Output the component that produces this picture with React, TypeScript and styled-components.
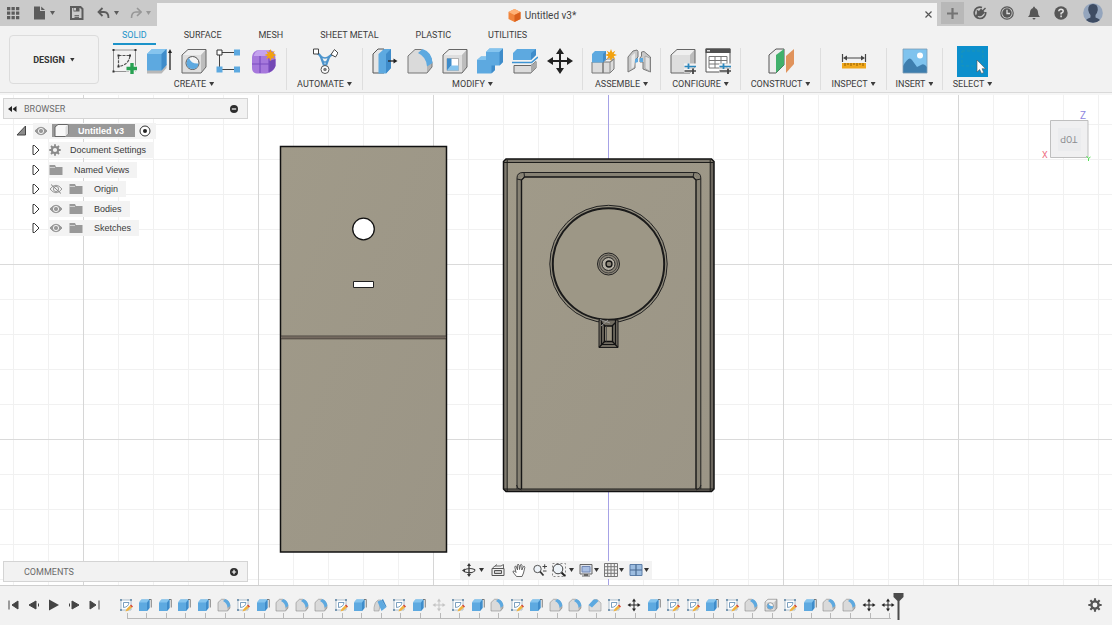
import React from 'react';
import styled, { createGlobalStyle, css } from 'styled-components';

const GlobalStyle = createGlobalStyle`
  * { box-sizing: border-box; }
  body { margin: 0; background: #f2f2f2; color: #3c3c3c; font-family: Roboto, "Liberation Sans", sans-serif; font-size: 9px; line-height: 12px; }
  button { margin: 0; padding: 0; border: 0; background: none; color: inherit; font: inherit; cursor: pointer; }
  ul, ol { margin: 0; padding: 0; list-style: none; }
  svg { display: block; flex: none; }
`;

/* ---------- layout ---------- */

const Page = styled.div`
  display: flex;
  flex-direction: column;
  min-height: 100vh;
`;

const TitleBar = styled.header`
  display: flex;
  height: 26px;
  background: #cacaca;
`;

const QuickTools = styled.div`
  display: flex;
  align-items: center;
  width: 157px;
  padding-left: 6px;
  gap: 11px;
`;

const QuickButton = styled.button<{ $faded?: boolean }>`
  display: flex;
  align-items: center;
  gap: 4px;
  color: ${(p) => (p.$faded ? '#979797' : '#5c5c5c')};
`;

const DocumentTab = styled.div`
  display: flex;
  flex: 1;
  align-items: center;
  margin-top: 3px;
  padding-right: 4px;
  background: #f2f2f2;
`;

const DocumentTitle = styled.h1`
  display: flex;
  flex: 1;
  align-items: center;
  justify-content: center;
  gap: 4px;
  margin: 0;
  padding: 2px 0 0 3px;
  color: #444;
  font-size: 10px;
  font-weight: 400;
`;

const AccountTools = styled.div`
  display: flex;
  align-items: center;
  width: 175px;
  padding: 0 6px 0 4px;
  color: #575757;
`;

const NewTab = styled.button`
  display: grid;
  place-items: center;
  width: 23px;
  height: 22px;
  margin-right: 2px;
  background: #b8b8b8;
`;

const RoundButton = styled.button`
  display: grid;
  place-items: center;
  width: 27px;
  height: 22px;
`;

const Avatar = styled.button`
  display: grid;
  justify-content: end;
  flex: 1;
  padding-right: 3px;
`;

const Ribbon = styled.section`
  display: flex;
  border-bottom: 1px solid #d9d9d9;
  background: #f2f2f2;
`;

const DesignButton = styled.button`
  display: flex;
  align-items: center;
  justify-content: center;
  gap: 5px;
  width: 90px;
  height: 49px;
  margin: 9px 3px 8px 9px;
  border: 1px solid #dcdcdc;
  border-radius: 4px;
  background: #f2f2f2;
  color: #333;
  font-weight: 700;
`;

const RibbonBody = styled.div`
  flex: 1;
`;

const TabRow = styled.nav`
  display: flex;
  gap: 19px;
  padding-left: 11px;
`;

const RibbonTab = styled.button<{ $active?: boolean }>`
  height: 19px;
  padding: 0 9px;
  border-bottom: 2px solid ${(p) => (p.$active ? '#1c93c9' : 'transparent')};
  color: ${(p) => (p.$active ? '#1c93c9' : '#3c3c3c')};
`;

const GroupRow = styled.div`
  display: flex;
  padding-top: 3px;
`;

const Group = styled.div<{ $width: number }>`
  display: flex;
  flex-direction: column;
  align-items: center;
  gap: 4px;
  width: ${(p) => p.$width}px;
  height: 42px;
  & + & { border-left: 1px solid #dedede; }
`;

const GroupIcons = styled.div`
  display: flex;
  gap: 9px;
  height: 26px;
`;

const IconButton = styled.button`
  display: grid;
  place-items: center;
  width: 26px;
  height: 26px;
`;

const SelectTile = styled.button`
  display: grid;
  place-items: center;
  align-self: center;
  width: 31px;
  height: 31px;
  background: #0c8fcc;
`;

const MenuLabel = styled.button`
  display: flex;
  align-items: center;
  gap: 3px;
  color: #3c3c3c;
  white-space: nowrap;
`;

const Caret = styled.span`
  width: 5px;
  height: 4px;
  background: currentColor;
  clip-path: polygon(0 0, 100% 0, 50% 100%);
`;

const Viewport = styled.main`
  position: relative;
  display: flex;
  flex: 1;
  flex-direction: column;
  justify-content: space-between;
  padding: 3px 3px;
  border-top: 2px solid #f6f6f6;
  background: #fff;
`;

const Scene = styled.svg`
  position: absolute;
  inset: 0;
  width: 100%;
  height: 100%;
`;

const Panel = styled.section`
  position: relative;
  width: 245px;
`;

const panelBar = css`
  display: flex;
  align-items: center;
  height: 21px;
  border: 1px solid #d4d4d4;
  background: #f2f2f2;
  color: #6a6a6a;
`;

const PanelHeader = styled.header`
  ${panelBar}
  padding: 0 9px 0 4px;
`;

const PanelTitle = styled.h2`
  flex: 1;
  margin: 0 0 0 7px;
  font-size: 9px;
  font-weight: 400;
`;

const CommentsBar = styled.section`
  ${panelBar}
  width: 245px;
  padding: 0 9px 0 13px;
`;

const Tree = styled.ul`
  display: grid;
  grid-template-rows: repeat(6, 1fr);
  height: 117px;
  margin-top: 2px;
  font-family: "Liberation Sans", sans-serif;
`;

const TreeRow = styled.li<{ $root?: boolean }>`
  display: flex;
  align-items: center;
  gap: ${(p) => (p.$root ? 6 : 8)}px;
  padding-left: ${(p) => (p.$root ? 13 : 29)}px;
`;

const TreeLabel = styled.div<{ $gap: number }>`
  display: flex;
  align-items: center;
  gap: ${(p) => p.$gap}px;
  height: 16px;
  padding: 0 8px 0 1px;
  background: #f3f3f3;
  color: #3a3a3a;
`;

const TreeIcons = styled.span`
  display: flex;
  align-items: center;
  gap: 6px;
`;

const RootLabel = styled.div`
  display: flex;
  align-items: center;
  gap: 4px;
  height: 16px;
  padding: 0 5px 0 1px;
  background: #f3f3f3;
`;

const RootName = styled.span`
  display: flex;
  align-items: center;
  gap: 9px;
  width: 83px;
  height: 13px;
  padding-left: 2px;
  background: #999;
  color: #fff;
  font-weight: 700;
`;

const BottomRow = styled.div`
  position: relative;
  display: grid;
  grid-template-columns: 1fr auto 1fr;
  align-items: center;
`;

const NavBar = styled.nav`
  display: flex;
  align-items: center;
  height: 18px;
  margin-bottom: 3px;
  background: #f3f3f3;
`;

const NavButton = styled.button`
  display: grid;
  place-items: center;
  width: 21px;
  height: 18px;
`;

const NavMenu = styled.button<{ $gap: number }>`
  display: flex;
  align-items: center;
  gap: ${(p) => p.$gap}px;
  height: 18px;
  padding: 0 3px 0 2px;
  color: #333;
`;

const Timeline = styled.footer`
  display: flex;
  align-items: stretch;
  height: 40px;
  padding: 0 10px 0 4px;
  border-top: 1px solid #cfcfcf;
  background: #f2f2f2;
`;

const PlayButton = styled.button`
  display: grid;
  place-items: center;
  width: 20px;
  padding-bottom: 2px;
`;

const Track = styled.ol`
  position: relative;
  display: flex;
  flex: 0 1 782px;
  margin: 0 auto 0 12px;
`;

const Feature = styled.li`
  position: relative;
  display: grid;
  flex: 1;
  place-items: center;
  padding-bottom: 2px;
  &::after {
    content: '';
    position: absolute;
    bottom: 6px;
    left: calc(50% + 1px);
    width: 100%;
    height: 5px;
    border-left: 1px solid #b9b9b9;
    border-bottom: 1px solid #b9b9b9;
  }
  &:nth-last-of-type(1)::after { width: 1px; }
`;

const Marker = styled.svg`
  position: absolute;
  top: 7px;
  right: -6px;
`;

const SettingsButton = styled.button`
  display: grid;
  place-items: center;
  padding-bottom: 2px;
`;

/* ---------- icon helpers ---------- */

type IconProps = { w?: number; h?: number; box?: string; children: React.ReactNode };

const Icon = ({ w = 26, h = w, box = `0 0 ${w} ${h}`, children }: IconProps) => (
  <svg width={w} height={h} viewBox={box} fill="none" aria-hidden="true">{children}</svg>
);

const BLUE = '#5da9e0';
const BLUE_LIGHT = '#85c4ee';
const BLUE_DARK = '#3f8cca';

const GreyCube = () => (
  <>
    <path d="M1 7L7 1.500H25V19L20 25H1Z" fill="#dedede" />
    <path d="M1 7L7 1.500H25L20 7Z" fill="#efefef" />
    <path d="M20 7L25 1.500V19L20 25Z" fill="#bdbdbd" />
    <path d="M1 7L7 1.500H25V19L20 25H1Z" stroke="#666" />
  </>
);

const Star = ({ x, y }: { x: number; y: number }) => (
  <path
    transform={`translate(${x} ${y})`}
    d="M0-6L1.300-2.600L4.300-4.300L2.700-1.200L6 0L2.700 1.300L4.300 4.300L1.300 2.700L0 6L-1.300 2.700L-4.300 4.300L-2.700 1.300L-6 0L-2.700-1.200L-4.300-4.300L-1.300-2.600Z"
    fill="#f2a20f"
  />
);

const Sliders = () => (
  <g>
    <path d="M14 17.500H26M14 22.500H26" stroke="#f2f2f2" strokeWidth="4" />
    <path d="M14.500 18.500H26" stroke="#2b87bd" strokeWidth="1.500" />
    <path d="M14.500 23H26" stroke="#444" strokeWidth="1.500" />
    <path d="M18.500 15.500V21" stroke="#2b87bd" strokeWidth="1.800" />
    <path d="M23 20.500V26" stroke="#444" strokeWidth="1.800" />
  </g>
);

const MoveShape = ({ color = '#222' }: { color?: string }) => (
  <g>
    <path d="M13 4V22M4 13H22" stroke={color} strokeWidth="2" />
    <path d="M13 0L17 6H9ZM13 26L17 20H9ZM0 13L6 9V17ZM26 13L20 9V17Z" fill={color} />
  </g>
);

const ExtrudeShape = () => (
  <g>
    <path d="M1 20L6 16H20.500V20L15.500 25.500H1Z" fill="#b8b8b8" />
    <path d="M1 6L6 1H20.500V17L15.500 22.500H1Z" fill={BLUE} />
    <path d="M1 6L6 1H20.500L15.500 6Z" fill={BLUE_LIGHT} />
    <path d="M15.500 6L20.500 1V17L15.500 22.500Z" fill={BLUE_DARK} />
    <path d="M24 22V3" stroke="#222" strokeWidth="1.300" />
    <path d="M24 1L26 5H22Z" fill="#222" />
  </g>
);

/* the small timeline cube has no grey base and only a hint of an arrow */
const ExtrudeSmall = () => (
  <g>
    <path d="M1 8L6 2H22V19L17 25H1Z" fill={BLUE} />
    <path d="M1 8L6 2H22L17 8Z" fill={BLUE_LIGHT} />
    <path d="M17 8L22 2V19L17 25Z" fill={BLUE_DARK} />
    <path d="M21 2H25.500V18" stroke="#555" strokeWidth="1.500" />
  </g>
);

const FilletShape = () => (
  <g>
    <path d="M1 8L8 1.500H14Q24 5 25 15V19L20 25H1Z" fill="#dadada" />
    <path d="M20 17L25 15V19L20 25Z" fill="#b5b5b5" />
    <path d="M1 8L8 1.500H14Q24 5 25 15V19L20 25H1Z" stroke="#777" />
    <path d="M11 5L15.500 1Q25 4 25.500 15L20 18.500Q19.500 9 11 5Z" fill={BLUE} />
  </g>
);

const HoleShape = () => (
  <g>
    <GreyCube />
    <circle cx="11.500" cy="15" r="6.500" fill="#f4f4f4" stroke="#555" />
    <path d="M8 10Q10 16 17.500 15.500Q17 21 11.500 21Q5.500 20.500 5.500 15Q5.800 11.500 8 10Z" fill={BLUE} />
  </g>
);

/* ---------- ribbon icons ---------- */

const SketchIcon = () => (
  <Icon>
    <path d="M2.500 2H24.500V23.500H2.500Z" stroke="#888" strokeWidth=".9" />
    <path d="M7.500 7.500H19Q18 17 7.500 18.500Z" stroke="#555" strokeWidth="1.200" strokeDasharray="3 1" />
    <path d="M1.500 1h2v2h-2zM23.500 1h2v2h-2zM1.500 22.500h2v2h-2zM6.500 6.500h2v2h-2zM18 6.500h2v2h-2zM6.500 17.500h2v2h-2z" fill="#333" />
    <path d="M21 14V26M15 20.500H27" stroke="#f2f2f2" strokeWidth="6" />
    <path d="M21 15V26M15.500 20.500H26" stroke="#28a152" strokeWidth="3.400" />
  </Icon>
);
const ExtrudeIcon = () => <Icon><ExtrudeShape /></Icon>;
const HoleIcon = () => <Icon><HoleShape /></Icon>;
const PatternIcon = () => (
  <Icon>
    <path d="M3.500 4.500H21M3.500 4.500V21.500H21" stroke="#444" />
    <path d="M1 2h5v5H1z" fill="#fff" stroke="#333" />
    <path d="M18 1.500h6v6h-6zM.5 18.500h6v6h-6zM18 18.500h6v6h-6z" fill={BLUE} />
  </Icon>
);
const FormIcon = () => (
  <Icon>
    <path d="M1 9Q2 2 9 2H19Q25 3 24.500 12V18Q22 25 15 25.500H6Q1 25 1 20Z" fill="#a678dc" />
    <path d="M3 7Q5 2 10 2H18L16 8H3Z" fill="#c4a2ee" />
    <path d="M18 13L24.500 11V18Q23 22 18 24.500Z" fill="#7448b4" />
    <path d="M1 16H18M9 8V25M18 9V24" stroke="#7a4cc0" strokeWidth="1.200" />
    <Star x={19.500} y={7} />
  </Icon>
);
const AutomateIcon = () => (
  <Icon>
    <path d="M5 5Q9 7 10 12L13 20L16 12Q17 7 22 6" stroke="#4c94cc" strokeWidth="2.200" />
    <path d="M8.500 8Q13 12 17.500 8L14.500 14H11.500Z" fill="#f2f2f2" stroke="#4c94cc" strokeWidth="1.600" />
    <path d="M1.500 1h5v5h-5z" fill="#fff" stroke="#444" />
    <path d="M22.500 1.500L26 5L23.500 9L19 6.500Z" fill="#fff" stroke="#444" />
    <circle cx="13" cy="21.500" r="4" fill="#fff" stroke="#555" />
    <circle cx="13" cy="21.500" r="1.700" fill="#777" />
  </Icon>
);
const PressPullIcon = () => (
  <Icon>
    <path d="M1 6L6 1H12V25H1Z" fill="#e5e5e5" stroke="#555" />
    <path d="M6.500 6L12 1H19V20L14 25.500H6.500Z" fill={BLUE} />
    <path d="M14 6L19 1V20L14 25.500Z" fill={BLUE_DARK} />
    <path d="M16 13H23" stroke="#222" strokeWidth="1.300" />
    <path d="M25.500 13L21.500 10.500V15.500Z" fill="#222" />
  </Icon>
);
const FilletIcon = () => <Icon><FilletShape /></Icon>;
const ShellIcon = () => (
  <Icon>
    <GreyCube />
    <path d="M5 10.500H16.500V22.500H5Z" fill="#fff" stroke="#888" strokeWidth=".6" />
    <path d="M5 10.500H9.500V17.500L5 22.500Z" fill={BLUE_DARK} />
    <path d="M9.500 17.500H16.500V22.500H5Z" fill={BLUE_LIGHT} />
  </Icon>
);
const CombineIcon = () => (
  <Icon>
    <path d="M0 12L4 8.500H9V4L12.500 .5H26V14L22.500 17.500H18V22L14 25.500H0Z" fill={BLUE} />
    <path d="M9 4L12.500 .5H26L22.500 4ZM0 12L4 8.500H9V12Z" fill={BLUE_LIGHT} />
    <path d="M22.500 4L26 .5V14L22.500 17.500ZM14.500 17.500H18V22L14.500 25.500Z" fill={BLUE_DARK} />
  </Icon>
);
const SplitIcon = () => (
  <Icon>
    <path d="M1 5L5 1H24V7L19 12H1Z" fill={BLUE} />
    <path d="M19 5L24 1V7L19 12Z" fill={BLUE_DARK} />
    <path d="M0 14.500H19.500L26 9" stroke="#3c94d4" strokeWidth="1.600" />
    <path d="M2 17.500H19L24 13.500V20L19 25H2Z" fill="#dcdcdc" stroke="#666" />
    <path d="M19 17.500L24 13.500V20L19 25Z" fill="#aaa" />
  </Icon>
);
const MoveIcon = () => <Icon><MoveShape /></Icon>;
const ComponentIcon = () => (
  <Icon>
    <path d="M1 14H12V25H1ZM12 14H19L23 11V21L19 25H12Z" fill="#dcdcdc" stroke="#777" />
    <path d="M12 14L16 11H23L19 14V25" stroke="#888" />
    <path d="M1 6L4 3H15V11L12 14.500H1Z" fill={BLUE} />
    <path d="M12 6L15 3V11L12 14.500Z" fill={BLUE_DARK} />
    <Star x={20} y={7} />
  </Icon>
);
const JointIcon = () => (
  <Icon>
    <path d="M2 9L7 3L11 2L12 3.500V9L9 12V20L2 24Z" fill="#c9c9c9" stroke="#777" />
    <path d="M5.500 8L9 5V12L8 19L5.500 20.500Z" fill="#e9e9e9" />
    <path d="M14 10L15.500 8V4L18 3.500L24.500 9V24L17 21V14H14Z" fill="#c9c9c9" stroke="#777" />
    <path d="M19 8V20.500L24 23.500V10Z" fill="#e2e2e2" stroke="#999" strokeWidth=".7" />
    <path d="M9 11L12 10V14L9 15ZM14 10H17V14H14Z" fill={BLUE} />
  </Icon>
);
const ConfigureIcon = () => <Icon><GreyCube /><Sliders /></Icon>;
const TableIcon = () => (
  <Icon>
    <path d="M1 1H25V24H1Z" fill="#fff" stroke="#555" />
    <path d="M.5 .5H25.500V5H.5Z" fill="#505050" />
    <path d="M2 2H5V3.500H2Z" fill="#ddd" />
    <path d="M4 8.500H22V20H4ZM4 12.500H22M4 16H22M10 8.500V20M16 8.500V20" stroke="#777" />
    <Sliders />
  </Icon>
);
const ConstructIcon = () => (
  <Icon>
    <path d="M1 7L8 1H16V17L8 25H1Z" fill="#eee" stroke="#555" />
    <path d="M8 7L16 1V17L8 25Z" fill="#41b06b" />
    <path d="M18 8L26 1V16L18 25Z" fill="#e0935c" />
  </Icon>
);
const InspectIcon = () => (
  <Icon>
    <path d="M1.500 6V14M24.500 6V14" stroke="#444" strokeWidth="1.200" />
    <path d="M4 10H22" stroke="#444" />
    <path d="M2 10L6 7.500V12.500ZM24 10L20 7.500V12.500Z" fill="#444" />
    <path d="M1 15H25V20.500H1Z" fill="#f0a81c" />
    <path d="M4 15V18M7 15V17M10 15V18M13 15V17M16 15V18M19 15V17M22 15V18" stroke="#915c00" />
  </Icon>
);
const InsertIcon = () => (
  <Icon>
    <path d="M1 1H25V25H1Z" fill="#7fc3ee" />
    <path d="M1 18Q7 7 10 12L15 19L19 17Q22 15 25 19V25H1Z" fill="#3e7eae" />
    <circle cx="18" cy="7.500" r="3" fill="#fff" />
    <path d="M1 1H25V25H1Z" stroke="#7b9db5" strokeWidth=".8" />
  </Icon>
);
const SelectIcon = () => (
  <Icon w={31}>
    <path d="M5 5H26V20H5Z" stroke="#1c94b4" strokeDasharray="3 2" />
    <path d="M20 14V26L22.700 23.500L24.500 27.500L26.700 26.500L25 22.700H28.500Z" fill="#fff" stroke="#555" strokeWidth=".6" />
  </Icon>
);

/* ---------- panel and navigation icons ---------- */

const EyeIcon = ({ hidden }: { hidden?: boolean }) => (
  <Icon w={14} h={12}>
    <path d="M1 6Q7-1.500 13 6Q7 13.500 1 6Z" fill={hidden ? '#f3f3f3' : '#999'} stroke="#999" />
    <circle cx="7" cy="6" r="2.600" fill={hidden ? '#f3f3f3' : '#999'} stroke={hidden ? '#999' : '#f3f3f3'} />
    {hidden && <path d="M2 1.500L12 10.500" stroke="#888" />}
  </Icon>
);
const FolderIcon = () => (
  <Icon w={14} h={12}>
    <path d="M.5 1H6L7 3H13.500V11H.5Z" fill="#999" />
    <path d="M.5 3.500H6" stroke="#dcdcdc" strokeWidth=".8" />
  </Icon>
);
const GearIcon = ({ size = 12, color = '#8a8a8a' }: { size?: number; color?: string }) => (
  <Icon w={size} box="0 0 12 12">
    <circle cx="6" cy="6" r="3.100" stroke={color} strokeWidth="2" />
    <path d="M6 .3V2.500M6 9.500V11.700M.3 6H2.500M9.500 6H11.700M2 2L3.500 3.500M8.500 8.500L10 10M10 2L8.500 3.500M3.500 8.500L2 10" stroke={color} strokeWidth="1.800" />
  </Icon>
);
const BodyIcon = () => (
  <Icon w={15} h={13}>
    <path d="M1 3L4 .5H14V10L11.500 12.500H1Z" fill="#f8f8f8" stroke="#666" />
    <path d="M11.500 3L14 .5V10L11.500 12.500Z" fill="#ddd" />
  </Icon>
);
const ExpandIcon = () => (
  <Icon w={8} h={12}><path d="M1 1.500H2.500L7 6L2.500 10.500H1Z" stroke="#333" fill="#fff" /></Icon>
);
const CollapseIcon = () => (
  <Icon w={11} h={11}><path d="M1 10L9.500 1V10Z" fill="#8c8c8c" stroke="#444" /></Icon>
);
const TargetIcon = () => (
  <Icon w={12}><circle cx="6" cy="6" r="5" fill="#fff" stroke="#333" /><circle cx="6" cy="6" r="2" fill="#222" /></Icon>
);
const ToggleIcon = ({ plus }: { plus?: boolean }) => (
  <Icon w={8}>
    <circle cx="4" cy="4" r="4" fill="#2d2d2d" />
    <path d={plus ? 'M1.800 4H6.200M4 1.800V6.200' : 'M1.800 4H6.200'} stroke="#fff" strokeWidth="1.200" />
  </Icon>
);

const OrbitIcon = () => (
  <Icon w={14}>
    <path d="M7 2V12" stroke="#333" strokeWidth="1.300" />
    <path d="M7 0L9 3H5ZM7 14L9 11H5ZM0 7.500L3 5.500V9.500Z" fill="#333" />
    <path d="M1 7.500Q7 4 12.500 6.500Q14 8 10 9.500Q7 10 3 9" stroke="#444" strokeWidth="1.100" />
  </Icon>
);
const LookAtIcon = () => (
  <Icon w={14}>
    <path d="M1 5.500H13V12.500H1Z" fill="#eee" stroke="#555" />
    <path d="M3.500 7.500H10.500V10.500H3.500Z" fill="#ccc" stroke="#555" />
    <path d="M1.500 5L4 3H10L12.500 1.500V5M4 3L6 1.500" stroke="#666" />
  </Icon>
);
const HandIcon = () => (
  <Icon w={14}>
    <path d="M4.500 13.500L1 9Q.8 7.500 2.500 8L4 9.500L2.800 4Q3 2.500 4.300 3.500L5.500 7L5.300 2Q6 .3 7 2L7.500 6.500L8.500 1.800Q9.500 .8 10 2.200L9.800 7L11.500 3.500Q12.800 2.800 12.800 4.500L11.500 10L10 13.500Z" fill="#fff" stroke="#555" strokeWidth=".9" />
  </Icon>
);
const ZoomIcon = () => (
  <Icon w={14}>
    <circle cx="4.500" cy="6" r="3.700" fill="#eef3f8" stroke="#555" />
    <path d="M7 8.500L10.500 12.500" stroke="#333" strokeWidth="1.800" />
    <path d="M9.500 3.500H14M11.700 1.300V5.700M10 8H13.500" stroke="#444" />
  </Icon>
);
const FitIcon = () => (
  <Icon w={14}>
    <path d="M.5 .5H13.500V13.500H.5Z" stroke="#888" strokeDasharray="2 2" />
    <circle cx="6" cy="6" r="4.800" fill="#edf3f8" stroke="#444" />
    <path d="M9.500 9.500L13 13" stroke="#222" strokeWidth="2" />
  </Icon>
);
const DisplayIcon = () => (
  <Icon w={14}>
    <path d="M1 1.500H13V11H1Z" fill="#dfe3ea" stroke="#666" />
    <path d="M3 3.500H11V9H3Z" fill="#a9bfe3" stroke="#7288b5" />
    <path d="M5 11H9V12.500H11V13.500H3V12.500H5Z" fill="#666" />
  </Icon>
);
const GridIcon = () => (
  <Icon w={14}>
    <path d="M.5 .5H13.500V13.500H.5ZM.5 3.700H13.500M.5 7H13.500M.5 10.300H13.500M3.700 .5V13.500M7 .5V13.500M10.300 .5V13.500" stroke="#777" fill="#f4f4f4" />
  </Icon>
);
const ViewsIcon = () => (
  <Icon w={14}>
    <path d="M1 1.500H13V12.500H1Z" fill="#9dbde0" stroke="#5c7ea8" />
    <path d="M7 1.500V12.500M1 7H13" stroke="#48698f" strokeWidth="1.200" />
  </Icon>
);

/* ---------- timeline icons ---------- */

type FeatureKind = 'sketch' | 'extrude' | 'fillet' | 'draft' | 'chamfer' | 'hole' | 'move' | 'moveOff';

const featureArt: Record<FeatureKind, React.ReactNode> = {
  sketch: (
    <g>
      <path d="M3 3H23V23H3Z" fill="#fff" stroke="#93abbf" strokeWidth="1.500" />
      <path d="M8 8H19Q18 17 8 18Z" stroke="#5b88ae" strokeWidth="1.600" />
      <path d="M1 1h4v4H1zM21 1h4v4h-4zM1 21h4v4H1z" fill="#7898b2" />
      <path d="M12 26L14 21L21 14L25 18L18 24Z" fill="#f0b340" />
      <path d="M21 14L23 12L27 16L25 18Z" fill="#d8432f" />
    </g>
  ),
  extrude: <ExtrudeSmall />,
  fillet: <FilletShape />,
  draft: (
    <g>
      <path d="M1 18Q2 7 9 3H15L11 25H1Z" fill="#d5d5d5" stroke="#888" />
      <path d="M8 6L16 3L25 18L16 25Z" fill={BLUE} />
      <path d="M16 3L19 1L26 16L25 18Z" fill={BLUE_DARK} />
    </g>
  ),
  chamfer: (
    <g>
      <path d="M1 14L12 2H17L25 9V25H1Z" fill="#dedede" stroke="#888" />
      <path d="M0 13L10 2H17L20 5L7 18Z" fill={BLUE} />
    </g>
  ),
  hole: <HoleShape />,
  move: <MoveShape />,
  moveOff: <MoveShape color="#c4c4c4" />,
};

const S: FeatureKind = 'sketch';
const E: FeatureKind = 'extrude';
const F: FeatureKind = 'fillet';
const M: FeatureKind = 'move';
const features: FeatureKind[] = [
  S, E, E, E, E, F, S, E, F, F,
  F, S, E, 'draft', S, E, 'moveOff', S, E, F,
  S, E, F, F, 'chamfer', S, M, E, S, S,
  E, S, F, 'hole', S, E, F, F, M, M,
];

const playback = [
  { name: 'Go to start', d: 'M2 2.500V11.500M11 3L5 7L11 11Z' },
  { name: 'Step back', d: 'M9 3L2 7L9 11ZM11.500 5.500V8.500' },
  { name: 'Play', d: 'M2 1.500L12 7L2 12.500Z' },
  { name: 'Step forward', d: 'M5 3L12 7L5 11ZM2.500 5.500V8.500' },
  { name: 'Go to end', d: 'M12 2.500V11.500M3 3L9 7L3 11Z' },
];

const groups = [
  { label: 'CREATE', width: 184, icons: [SketchIcon, ExtrudeIcon, HoleIcon, PatternIcon, FormIcon] },
  { label: 'AUTOMATE', width: 76, icons: [AutomateIcon] },
  { label: 'MODIFY', width: 220, icons: [PressPullIcon, FilletIcon, ShellIcon, CombineIcon, SplitIcon, MoveIcon] },
  { label: 'ASSEMBLE', width: 78, icons: [ComponentIcon, JointIcon] },
  { label: 'CONFIGURE', width: 80, icons: [ConfigureIcon, TableIcon] },
  { label: 'CONSTRUCT', width: 80, icons: [ConstructIcon] },
  { label: 'INSPECT', width: 66, icons: [InspectIcon] },
  { label: 'INSERT', width: 56, icons: [InsertIcon] },
];

const tabs = ['SOLID', 'SURFACE', 'MESH', 'SHEET METAL', 'PLASTIC', 'UTILITIES'];

const treeItems = [
  { name: 'Document Settings', gap: 9, icons: <GearIcon /> },
  { name: 'Named Views', gap: 11, icons: <FolderIcon /> },
  { name: 'Origin', gap: 11, icons: <><EyeIcon hidden /><FolderIcon /></> },
  { name: 'Bodies', gap: 11, icons: <><EyeIcon /><FolderIcon /></> },
  { name: 'Sketches', gap: 11, icons: <><EyeIcon /><FolderIcon /></> },
];

/* ---------- scene ---------- */

const range = (from: number, to: number, step: number) =>
  Array.from({ length: Math.floor((to - from) / step) + 1 }, (_, i) => from + i * step);

const Model = () => (
  <Scene viewBox="0 95 1112 490" preserveAspectRatio="xMidYMid slice" fill="none" role="img" aria-label="Model, top view">
    <defs>
      <linearGradient id="plate" x1="0" y1="0" x2="1" y2="1">
        <stop offset="0" stopColor="#a09a89" />
        <stop offset="1" stopColor="#9b9586" />
      </linearGradient>
    </defs>
    {range(13, 1112, 35).map((x) => <path key={x} d={`M${x}.500 95V585`} stroke="#f1f1f1" />)}
    {range(124, 585, 35).map((y) => <path key={y} d={`M0 ${y}.500H1112`} stroke="#f1f1f1" />)}
    {[83, 258, 433, 783, 958].map((x) => <path key={x} d={`M${x}.500 95V585`} stroke="#d6d6d6" />)}
    {[264, 439].map((y) => <path key={y} d={`M0 ${y}.500H1112`} stroke="#dadada" />)}
    <path d="M608.500 95V585" stroke="#a6a2e6" />

    <path d="M280.500 146.500H446.500V552H280.500Z" fill="url(#plate)" stroke="#111" strokeWidth="1.500" />
    <path d="M281 337.500H446" stroke="#74695f" strokeWidth="2" />
    <path d="M281 336H446M281 338.800H446" stroke="#38312d" strokeWidth=".8" />
    <circle cx="363.500" cy="229" r="10.800" fill="#fff" stroke="#111" strokeWidth="1.300" />
    <path d="M353.500 281.500H373.500V287.500H353.500Z" fill="#fff" stroke="#222" />

    <path d="M506 159H711.500L714 161.500V489L711.500 491.500H506L503.500 489V161.500Z" fill="url(#plate)" />
    <path d="M503.500 161.500L506 159H711.500L714 161.500V162.500H507V489H503.500Z" fill="#7f7a6f" />
    <path d="M710 162H714V489H710Z" fill="#6b665e" />
    <path d="M503.500 489H714L711.500 491.500H506Z" fill="#6b665e" />
    <path d="M517 489V178Q517 172.500 523 172.500H695Q700.800 172.500 700.800 178V489H696V177H521.500V489Z" fill="#878274" />
    <path d="M506 159H711.500L714 161.500V489L711.500 491.500H506L503.500 489V161.500Z" stroke="#111" strokeWidth="1.500" />
    <path d="M503.500 162.500H714M507.200 160V491M710.200 160V491M503.500 489H714" stroke="#1d1d1b" />
    <path d="M517 489V178Q517 172.500 523 172.500H695Q700.800 172.500 700.800 178V489" stroke="#222" />
    <path d="M521.500 489V180L524.500 177H693L696 180V489" stroke="#161616" strokeWidth="1.400" />
    <path d="M517 179L521.500 180M524 172.500L524.500 177M694 172.500L693 177M700.800 179L696 180M516.500 485Q517 489 521.500 490M701 485Q700.500 489 696 490" stroke="#222" />

    <circle cx="608.500" cy="264" r="58.700" fill="#918c7d" stroke="#222" />
    <circle cx="608.500" cy="264" r="55.700" fill="#9d9786" stroke="#1a1a1a" strokeWidth="2" />
    <circle cx="608.500" cy="264" r="11" fill="#8a8477" stroke="#222" />
    <circle cx="608.500" cy="264" r="9" stroke="#333" strokeWidth=".8" />
    <circle cx="608.500" cy="264" r="6.500" fill="#b4afa3" stroke="#222" />
    <circle cx="609" cy="264" r="3" fill="#8a8477" stroke="#111" strokeWidth="1.300" />
    <path d="M599 320H618V347.500H599Z" fill="#706b60" stroke="#1c1c1c" />
    <path d="M601.500 320V344.500H615.500V320M599 347.500L605 341M618 347.500L612 341M601 322L605 326M616 322L612 326" stroke="#141414" strokeWidth="1.200" />
    <path d="M604.500 326H612.500V341.500H604.500Z" fill="#98917f" stroke="#111" strokeWidth="1.300" />
    <path d="M606.500 326V341.500" stroke="#444" strokeWidth=".8" />
    <path d="M600 319.500L610 323M601 326L608 320" stroke="#a9a9a9" strokeWidth=".8" />

    <g fontFamily="Roboto, sans-serif">
      <path d="M1050.500 120.500H1088V157.500H1050.500Z" fill="#f0f0f1" stroke="#bfbfbf" />
      <path d="M1058 128H1081V151H1058Z" fill="#ebecee" />
      <text transform="rotate(180 1069 139)" x="1069" y="142" textAnchor="middle" fontSize="9" fill="#8b8c90">TOP</text>
      <text x="1080" y="119" fontSize="10" fill="#8d86e0">Z</text>
      <text x="1042" y="158" fontSize="9" fill="#ee6f85">X</text>
      <path d="M1086.500 156L1088.500 158.500L1090.500 157M1088.500 158.500V161" stroke="#54e254" />
    </g>
  </Scene>
);

/* ---------- page ---------- */

export default function App() {
  return (
    <Page>
      <GlobalStyle />
      <TitleBar>
        <QuickTools>
          <QuickButton aria-label="Data panel">
            <Icon w={14}>
              <path d="M1 1h3.300v3.300H1zM5.500 1h3.300v3.300H5.500zM10 1h3.300v3.300H10zM1 5.500h3.300v3.300H1zM5.500 5.500h3.300v3.300H5.500zM10 5.500h3.300v3.300H10zM1 10h3.300v3.300H1zM5.500 10h3.300v3.300H5.500zM10 10h3.300v3.300H10z" fill="currentColor" />
            </Icon>
          </QuickButton>
          <QuickButton aria-label="File">
            <Icon w={15} h={14}>
              <path d="M3 .5H9V5H14V13.500H3ZM10.200 .5L14 4H10.200Z" fill="currentColor" />
            </Icon>
            <Caret />
          </QuickButton>
          <QuickButton aria-label="Save">
            <Icon w={20} h={14}>
              <path d="M5 1H14.500L16.500 3V13H5Z" stroke="currentColor" strokeWidth="2" />
              <path d="M7.500 1.500H13.500V5.500H7.500Z" fill="currentColor" />
              <path d="M8 2H10V4.500H8ZM7.500 8.500H14V12H7.500Z" fill="#cacaca" />
              <path d="M8.500 9.700H13M8.500 11.400H13" stroke="currentColor" />
            </Icon>
          </QuickButton>
          <QuickButton aria-label="Undo">
            <Icon w={13} h={12}>
              <path d="M2 5H7Q11.500 5 11.500 11" stroke="currentColor" strokeWidth="1.800" />
              <path d="M5.500 1L1.500 5L5.500 9" stroke="currentColor" strokeWidth="1.800" />
            </Icon>
            <Caret />
          </QuickButton>
          <QuickButton aria-label="Redo" $faded>
            <Icon w={12}>
              <path d="M10.500 5H6Q1.500 5 1.500 11" stroke="currentColor" strokeWidth="1.600" />
              <path d="M7 1L11 5L7 9" stroke="currentColor" strokeWidth="1.600" />
            </Icon>
            <Caret />
          </QuickButton>
        </QuickTools>
        <DocumentTab>
          <DocumentTitle>
            <Icon w={13}>
              <path d="M6.500 0L12.500 3V10L6.500 13L.5 10V3Z" fill="#f1853d" />
              <path d="M6.500 0L12.500 3L6.500 6L.5 3Z" fill="#ffb277" />
              <path d="M6.500 6L12.500 3V10L6.500 13Z" fill="#d9601c" />
            </Icon>
            Untitled v3*
          </DocumentTitle>
          <button aria-label="Close tab">
            <Icon w={9}><path d="M1.500 1.500L7.500 7.500M7.500 1.500L1.500 7.500" stroke="#555" strokeWidth="1.200" /></Icon>
          </button>
        </DocumentTab>
        <AccountTools>
          <NewTab aria-label="New tab">
            <Icon w={11}><path d="M5.500 0V11M0 5.500H11" stroke="#747474" strokeWidth="2.200" /></Icon>
          </NewTab>
          <RoundButton aria-label="Extensions">
            <Icon w={14}>
              <path d="M9 1.500A5.700 5.700 0 1 0 12.600 6" stroke="currentColor" strokeWidth="1.700" />
              <path d="M3.500 3.500L6 5L8 2.500L9.500 4L12 1.500L13 2.500L10.500 5L12 6.500L9.500 9Q8 11 5.500 10L3 12L2.500 10Q4.500 8 3.500 3.500Z" fill="currentColor" />
            </Icon>
          </RoundButton>
          <RoundButton aria-label="Job status">
            <Icon w={14}>
              <circle cx="7" cy="7" r="6.200" stroke="currentColor" strokeWidth="1.200" />
              <circle cx="7" cy="7" r="4.700" fill="currentColor" />
              <path d="M7 3.800V7.500H10" stroke="#ddd" strokeWidth="1.300" />
            </Icon>
          </RoundButton>
          <RoundButton aria-label="Notifications">
            <Icon w={14}>
              <path d="M7 .5Q8 .5 8 2Q11 3 11 6.500Q11 9.500 13 11H1Q3 9.500 3 6.500Q3 3 6 2Q6 .5 7 .5ZM5.500 12H8.500Q8.300 13.500 7 13.500Q5.700 13.500 5.500 12Z" fill="currentColor" />
            </Icon>
          </RoundButton>
          <RoundButton aria-label="Help">
            <Icon w={14}>
              <circle cx="7" cy="7" r="6.700" fill="currentColor" />
              <path d="M4.800 5.300Q5 3.300 7 3.300Q9.200 3.400 9.200 5.200Q9.200 6.300 7.100 7.300V8.500M7.100 9.600V11.200" stroke="#e5e5e5" strokeWidth="1.500" />
            </Icon>
          </RoundButton>
          <Avatar aria-label="Account">
            <Icon w={20}>
              <circle cx="10" cy="10" r="9.800" fill="#94a5bd" />
              <path d="M10 1Q15 1 14.800 7Q14 11 12.500 12V14.500Q16 15.500 17 17Q14 19.800 10 19.800Q6 19.800 3 17Q4 15.500 7.500 14.500V12Q6 11 5.200 7Q5 1 10 1Z" fill="#3e4c63" />
            </Icon>
          </Avatar>
        </AccountTools>
      </TitleBar>

      <Ribbon>
        <DesignButton>DESIGN<Caret /></DesignButton>
        <RibbonBody>
          <TabRow>
            {tabs.map((tab, i) => <RibbonTab key={tab} $active={i === 0}>{tab}</RibbonTab>)}
          </TabRow>
          <GroupRow>
            {groups.map(({ label, width, icons }) => (
              <Group key={label} $width={width}>
                <GroupIcons>
                  {icons.map((Glyph, i) => (
                    <IconButton key={i} aria-label={`${label} tool ${i + 1}`}><Glyph /></IconButton>
                  ))}
                </GroupIcons>
                <MenuLabel>{label}<Caret /></MenuLabel>
              </Group>
            ))}
            <Group $width={60}>
              <GroupIcons>
                <SelectTile aria-label="Select tool"><SelectIcon /></SelectTile>
              </GroupIcons>
              <MenuLabel>SELECT<Caret /></MenuLabel>
            </Group>
          </GroupRow>
        </RibbonBody>
      </Ribbon>

      <Viewport>
        <Model />
        <Panel>
          <PanelHeader>
            <button aria-label="Collapse browser">
              <Icon w={9} h={6}><path d="M4 0V6L0 3ZM8.500 0V6L4.500 3Z" fill="#222" /></Icon>
            </button>
            <PanelTitle>BROWSER</PanelTitle>
            <button aria-label="Hide browser"><ToggleIcon /></button>
          </PanelHeader>
          <Tree>
            <TreeRow $root>
              <CollapseIcon />
              <RootLabel>
                <EyeIcon />
                <RootName><BodyIcon />Untitled v3</RootName>
                <TargetIcon />
              </RootLabel>
            </TreeRow>
            {treeItems.map(({ name, gap, icons }) => (
              <TreeRow key={name}>
                <ExpandIcon />
                <TreeLabel $gap={gap}><TreeIcons>{icons}</TreeIcons>{name}</TreeLabel>
              </TreeRow>
            ))}
          </Tree>
        </Panel>

        <BottomRow>
          <CommentsBar>
            <PanelTitle>COMMENTS</PanelTitle>
            <button aria-label="Show comments"><ToggleIcon plus /></button>
          </CommentsBar>
          <NavBar>
            <NavMenu $gap={3} aria-label="Orbit"><OrbitIcon /><Caret /></NavMenu>
            <NavButton aria-label="Look at"><LookAtIcon /></NavButton>
            <NavButton aria-label="Pan"><HandIcon /></NavButton>
            <NavButton aria-label="Zoom"><ZoomIcon /></NavButton>
            <NavMenu $gap={3} aria-label="Fit"><FitIcon /><Caret /></NavMenu>
            <NavMenu $gap={1} aria-label="Display settings"><DisplayIcon /><Caret /></NavMenu>
            <NavMenu $gap={1} aria-label="Grid and snaps"><GridIcon /><Caret /></NavMenu>
            <NavMenu $gap={1} aria-label="Viewports"><ViewsIcon /><Caret /></NavMenu>
          </NavBar>
        </BottomRow>
      </Viewport>

      <Timeline>
        {playback.map(({ name, d }) => (
          <PlayButton key={name} aria-label={name}>
            <Icon w={14}><path d={d} fill="#444" stroke="#444" strokeWidth={name === 'Play' ? 0 : 1} /></Icon>
          </PlayButton>
        ))}
        <Track>
          {features.map((kind, i) => (
            <Feature key={i}>
              <Icon w={14} box="-1 -1 28 28">{featureArt[kind]}</Icon>
            </Feature>
          ))}
          <Marker width="11" height="27" viewBox="0 0 11 27" aria-hidden="true">
            <path d="M.5 0H10.500V4L6.500 8V27H4.500V8L.5 4Z" fill="#4c4c4c" />
          </Marker>
        </Track>
        <SettingsButton aria-label="Timeline settings"><GearIcon size={14} color="#555" /></SettingsButton>
      </Timeline>
    </Page>
  );
}
